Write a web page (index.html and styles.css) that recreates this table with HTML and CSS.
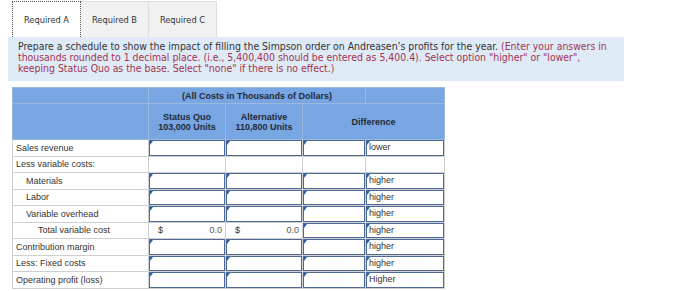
FILE: index.html
```html
<!DOCTYPE html>
<html lang="en">
<head>
<meta charset="utf-8">
<title>Required A</title>
<link rel="stylesheet" href="styles.css">
</head>
<body>
<div class="page">
  <div class="tabs">
    <div class="tab active">Required A</div>
    <div class="tab">Required B</div>
    <div class="tab">Required C</div>
  </div>
  <div class="prompt">
    Prepare a schedule to show the impact of filling the Simpson order on Andreasen’s profits for the year. <span class="note">(Enter your answers in thousands rounded to 1 decimal place. (i.e., 5,400,400 should be entered as 5,400.4). Select option "higher" or "lower", keeping Status Quo as the base. Select "none" if there is no effect.)</span>
  </div>
  <table class="sched">
    <colgroup>
      <col class="c-label"><col class="c-num"><col class="c-num2"><col class="c-diff"><col class="c-sel">
    </colgroup>
    <thead>
      <tr class="h1">
        <th></th>
        <th colspan="3">(All Costs in Thousands of Dollars)</th>
        <th></th>
      </tr>
      <tr class="h2">
        <th></th>
        <th>Status Quo<br>103,000 Units</th>
        <th>Alternative<br>110,800 Units</th>
        <th colspan="2">Difference</th>
      </tr>
    </thead>
    <tbody>
      <tr>
        <td class="lbl">Sales revenue</td>
        <td class="in"><div class="box"></div></td>
        <td class="in"><div class="box"></div></td>
        <td class="in"><div class="box"></div></td>
        <td class="in"><div class="box sel">lower</div></td>
      </tr>
      <tr>
        <td class="lbl">Less variable costs:</td>
        <td></td><td></td><td></td><td></td>
      </tr>
      <tr>
        <td class="lbl ind1">Materials</td>
        <td class="in"><div class="box"></div></td>
        <td class="in"><div class="box"></div></td>
        <td class="in"><div class="box"></div></td>
        <td class="in"><div class="box sel">higher</div></td>
      </tr>
      <tr>
        <td class="lbl ind1">Labor</td>
        <td class="in"><div class="box"></div></td>
        <td class="in"><div class="box"></div></td>
        <td class="in"><div class="box"></div></td>
        <td class="in"><div class="box sel">higher</div></td>
      </tr>
      <tr>
        <td class="lbl ind1">Variable overhead</td>
        <td class="in"><div class="box"></div></td>
        <td class="in"><div class="box"></div></td>
        <td class="in"><div class="box"></div></td>
        <td class="in"><div class="box sel">higher</div></td>
      </tr>
      <tr>
        <td class="lbl ind2">Total variable cost</td>
        <td class="calc"><span>$</span><span>0.0</span></td>
        <td class="calc"><span>$</span><span>0.0</span></td>
        <td class="in"><div class="box"></div></td>
        <td class="in"><div class="box sel">higher</div></td>
      </tr>
      <tr>
        <td class="lbl">Contribution margin</td>
        <td class="in"><div class="box"></div></td>
        <td class="in"><div class="box"></div></td>
        <td class="in"><div class="box"></div></td>
        <td class="in"><div class="box sel">higher</div></td>
      </tr>
      <tr>
        <td class="lbl">Less: Fixed costs</td>
        <td class="in"><div class="box"></div></td>
        <td class="in"><div class="box"></div></td>
        <td class="in"><div class="box"></div></td>
        <td class="in"><div class="box sel">higher</div></td>
      </tr>
      <tr>
        <td class="lbl">Operating profit (loss)</td>
        <td class="in"><div class="box"></div></td>
        <td class="in"><div class="box"></div></td>
        <td class="in"><div class="box"></div></td>
        <td class="in"><div class="box sel">Higher</div></td>
      </tr>
    </tbody>
  </table>
</div>
</body>
</html>
```

FILE: styles.css
```css
html, body {
  margin: 0;
  padding: 0;
  background: #fff;
}

.page {
  padding: 1px 0 0 8px;
}

/* tab strip */
.tabs {
  display: flex;
  margin-left: 4px;
  height: 36px;
}

.tab {
  width: 68px;
  display: flex;
  align-items: center;
  justify-content: center;
  font-family: "DejaVu Sans", Verdana, sans-serif;
  font-size: 9.2px;
  font-stretch: semi-condensed;
  color: #333;
  background: #f1f1f1;
  border: 1px solid #dedede;
  border-bottom: none;
  box-sizing: border-box;
}

.tab + .tab {
  border-left: none;
}

.tab.active {
  width: 69px;
  background: #fff;
  border: 1px dotted #555;
  border-bottom: none;
}

/* instruction panel */
.prompt {
  width: 616px;
  box-sizing: border-box;
  background: #dfeaf7;
  padding: 4px 6px 7px 10px;
  font-family: "DejaVu Sans", Verdana, sans-serif;
  font-size: 10.4px;
  font-stretch: semi-condensed;
  line-height: 11px;
  color: #333;
}

.note {
  color: #a3334f;
}

/* schedule table */
.sched {
  margin: 6px 0 0 4px;
  border-collapse: collapse;
  table-layout: fixed;
  width: 432px;
  font-family: "Liberation Sans", Arial, sans-serif;
  font-size: 9px;
  color: #333;
}

.c-label { width: 136px; }
.c-num { width: 77px; }
.c-num2 { width: 77px; }
.c-diff { width: 63px; }
.c-sel { width: 79px; }

.sched th {
  background: #78a6e2;
  color: #1f2a3a;
  font-weight: bold;
  font-size: 9px;
  border: 1px solid #9bb8de;
  padding: 0;
  line-height: 10px;
}

.sched tr.h1 th { height: 15px; }
.sched tr.h2 th { height: 35px; }

.sched td {
  border: 1px solid #cfcfcf;
  height: 15.5px;
  padding: 0;
  line-height: 14px;
  white-space: nowrap;
}

.lbl { padding-left: 3px !important; }
.ind1 { padding-left: 13px !important; }
.ind2 { padding-left: 25px !important; }

td.in {
  position: relative;
}

.box {
  position: relative;
  box-sizing: border-box;
  height: 15.5px;
  border: 1px solid #4d6b95;
  border-top-width: 1.5px;
  border-left-width: 1.5px;
  background: #fff;
}

/* little corner marker on each entry field */
.box::before {
  content: "";
  position: absolute;
  left: 0;
  top: 0;
  border-top: 4px solid #2e5aa6;
  border-right: 3px solid transparent;
}

.sel {
  padding-left: 2px;
  line-height: 13px;
  color: #333;
}

td.calc {
  padding: 0 2px 0 4px;
}

td.calc span:first-child {
  float: left;
  margin-left: 5px;
}

td.calc span:last-child {
  float: right;
  margin-right: 1px;
  color: #555;
}
```
